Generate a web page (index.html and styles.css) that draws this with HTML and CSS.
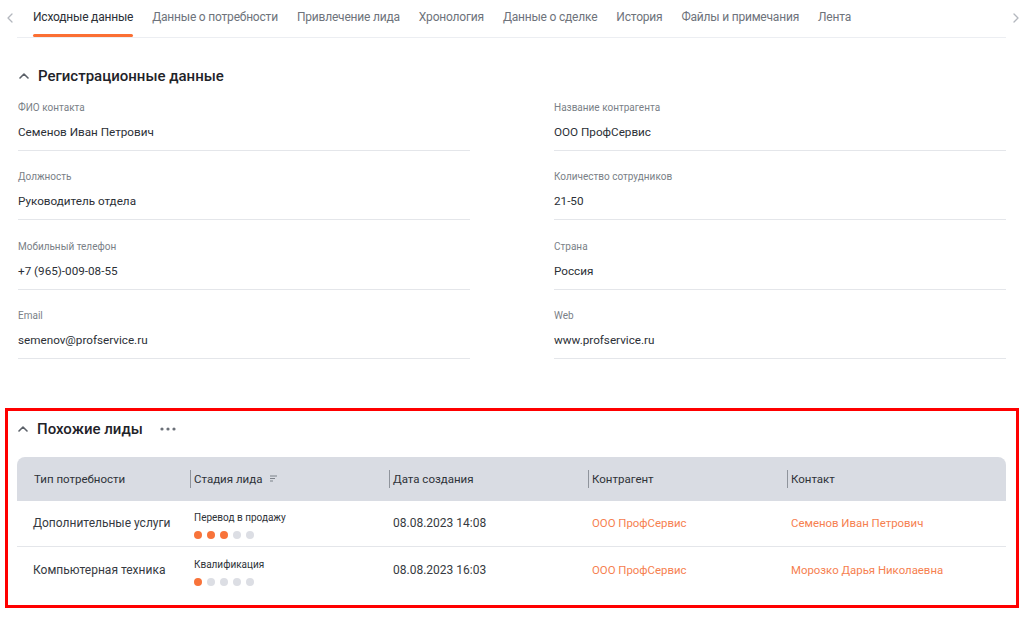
FILE: index.html
```html
<!DOCTYPE html>
<html lang="ru">
<head>
<meta charset="utf-8">
<title>Лид</title>
<link rel="stylesheet" href="styles.css">
</head>
<body>
<div class="page">
  <nav class="tabs">
    <button class="tab-arrow tab-arrow--left" aria-label="Назад">
      <svg width="6" height="10" viewBox="0 0 6 10"><path d="M5 1 1 5l4 4" fill="none" stroke="#b3b7be" stroke-width="1.3" stroke-linecap="round" stroke-linejoin="round"/></svg>
    </button>
    <ul class="tab-list">
      <li class="tab tab--active">Исходные данные</li>
      <li class="tab">Данные о потребности</li>
      <li class="tab">Привлечение лида</li>
      <li class="tab">Хронология</li>
      <li class="tab">Данные о сделке</li>
      <li class="tab">История</li>
      <li class="tab">Файлы и примечания</li>
      <li class="tab">Лента</li>
    </ul>
    <button class="tab-arrow tab-arrow--right" aria-label="Вперёд">
      <svg width="6" height="10" viewBox="0 0 6 10"><path d="M1 1l4 4-4 4" fill="none" stroke="#b3b7be" stroke-width="1.3" stroke-linecap="round" stroke-linejoin="round"/></svg>
    </button>
  </nav>

  <section class="section section--reg">
    <h2 class="section-title">
      <svg class="chev" width="10" height="6" viewBox="0 0 10 6"><path d="M1 5 5 1l4 4" fill="none" stroke="#5b6068" stroke-width="1.6" stroke-linecap="round" stroke-linejoin="round"/></svg>
      <span>Регистрационные данные</span>
    </h2>
    <div class="fields">
      <div class="field"><div class="field-label">ФИО контакта</div><div class="field-value">Семенов Иван Петрович</div></div>
      <div class="field"><div class="field-label">Название контрагента</div><div class="field-value">ООО ПрофСервис</div></div>
      <div class="field"><div class="field-label">Должность</div><div class="field-value">Руководитель отдела</div></div>
      <div class="field"><div class="field-label">Количество сотрудников</div><div class="field-value">21-50</div></div>
      <div class="field"><div class="field-label">Мобильный телефон</div><div class="field-value">+7 (965)-009-08-55</div></div>
      <div class="field"><div class="field-label">Страна</div><div class="field-value">Россия</div></div>
      <div class="field"><div class="field-label">Email</div><div class="field-value">semenov@profservice.ru</div></div>
      <div class="field"><div class="field-label">Web</div><div class="field-value">www.profservice.ru</div></div>
    </div>
  </section>

  <section class="section section--similar">
    <h2 class="section-title">
      <svg class="chev" width="10" height="6" viewBox="0 0 10 6"><path d="M1 5 5 1l4 4" fill="none" stroke="#5b6068" stroke-width="1.6" stroke-linecap="round" stroke-linejoin="round"/></svg>
      <span>Похожие лиды</span>
      <svg class="more" width="16" height="4" viewBox="0 0 16 4"><circle cx="2" cy="2" r="1.6" fill="#6b7078"/><circle cx="8" cy="2" r="1.6" fill="#6b7078"/><circle cx="14" cy="2" r="1.6" fill="#6b7078"/></svg>
    </h2>
    <table class="leads">
      <colgroup>
        <col class="col-1"><col class="col-2"><col class="col-3"><col class="col-4"><col>
      </colgroup>
      <thead>
        <tr>
          <th class="th-first">Тип потребности</th>
          <th><span class="th-sep">Стадия лида
            <svg class="sort" width="8" height="7" viewBox="0 0 8 7"><path d="M0 1h7M0 3.5h5M0 6h3" stroke="#7d828a" stroke-width="1.1"/></svg></span></th>
          <th><span class="th-sep">Дата создания</span></th>
          <th><span class="th-sep">Контрагент</span></th>
          <th><span class="th-sep">Контакт</span></th>
        </tr>
      </thead>
      <tbody>
        <tr>
          <td class="td-first">Дополнительные услуги</td>
          <td class="td-stage">
            <div class="stage-name">Перевод в продажу</div>
            <div class="stage-dots"><i class="dot on"></i><i class="dot on"></i><i class="dot on"></i><i class="dot"></i><i class="dot"></i></div>
          </td>
          <td class="td-date">08.08.2023 14:08</td>
          <td><a class="link">ООО ПрофСервис</a></td>
          <td><a class="link">Семенов Иван Петрович</a></td>
        </tr>
        <tr>
          <td class="td-first">Компьютерная техника</td>
          <td class="td-stage">
            <div class="stage-name">Квалификация</div>
            <div class="stage-dots"><i class="dot on"></i><i class="dot"></i><i class="dot"></i><i class="dot"></i><i class="dot"></i></div>
          </td>
          <td class="td-date">08.08.2023 16:03</td>
          <td><a class="link">ООО ПрофСервис</a></td>
          <td><a class="link">Морозко Дарья Николаевна</a></td>
        </tr>
      </tbody>
    </table>
  </section>
</div>
</body>
</html>
```

FILE: styles.css
```css
* { box-sizing: border-box; }
html, body { margin: 0; padding: 0; background: #fff; }
body {
  font-family: Roboto, "Liberation Sans", sans-serif;
  color: #2b2f36;
  width: 1024px;
  height: 621px;
  overflow: hidden;
}

/* tabs */
.tabs {
  display: flex;
  height: 38px;
}
.tab-arrow {
  border: 0;
  background: none;
  padding: 0;
  height: 35px;
  display: flex;
  align-items: center;
  justify-content: center;
  cursor: pointer;
}
.tab-arrow--left { width: 17px; padding-left: 3px; }
.tab-arrow--right { width: 18px; padding-left: 1px; }
.tab-list {
  flex: 1;
  display: flex;
  gap: 19px;
  list-style: none;
  margin: 0;
  padding: 0 0 0 16px;
  border-bottom: 1px solid #eceef2;
}
.tab {
  position: relative;
  font-size: 12px;
  letter-spacing: -0.2px;
  line-height: 35px;
  color: #6e737b;
  white-space: nowrap;
}
.tab--active { color: #2b2f36; }
.tab--active::after {
  content: "";
  position: absolute;
  left: 0;
  right: 0;
  bottom: 0;
  height: 3px;
  border-radius: 2px;
  background: #fb6f33;
}

/* sections */
.section-title {
  display: flex;
  align-items: center;
  margin: 0;
  font-size: 15px;
  line-height: 20px;
  font-weight: 500;
  color: #1f2329;
}
.chev { margin: 0 9px 0 0; flex: none; }
.more { margin-left: 17px; margin-top: 1px; }

.section--reg {
  padding: 28px 18px 0 18px;
}
.section--reg .section-title { padding-left: 1px; }
.fields {
  display: grid;
  grid-template-columns: 1fr 1fr;
  column-gap: 84px;
  row-gap: 19.33px;
  margin-top: 15px;
}
.field {
  border-bottom: 1px solid #e4e6ea;
  padding-bottom: 9px;
}
.field-label {
  font-size: 10px;
  line-height: 14px;
  color: #7a7f87;
}
.field-value {
  margin-top: 8px;
  font-size: 11.7px;
  line-height: 18px;
  color: #2b2f36;
}

.section--similar {
  margin: 49px 5px 0 5px;
  border: 3px solid #ff0000;
  padding: 8px 10px 12px 9px;
}
.section--similar .section-title { padding-left: 1px; }

.leads {
  margin-top: 18px;
  width: 100%;
  border-collapse: separate;
  border-spacing: 0;
  table-layout: fixed;
  font-size: 12px;
}
.col-1 { width: 173px; }
.col-2, .col-3, .col-4 { width: 199px; }

.leads thead th {
  background: #d9dce3;
  height: 44px;
  padding: 0;
  font-weight: 400;
  font-size: 11.5px;
  text-align: left;
  color: #2e3238;
  vertical-align: middle;
}
.leads thead th:first-child { border-top-left-radius: 8px; }
.leads thead th:last-child { border-top-right-radius: 8px; }
.th-first { padding-left: 17px !important; }
.th-sep {
  display: inline-flex;
  align-items: center;
  border-left: 1px solid #8f949c;
  padding-left: 3px;
  height: 18px;
  line-height: 18px;
}
.sort { margin-left: 8px; }

.leads tbody td {
  height: 46px;
  padding: 0 0 0 4px;
  vertical-align: middle;
  color: #363a41;
}
.leads tbody tr:first-child td { border-bottom: 1px solid #e4e6ea; }
.leads tbody td.td-first { padding-left: 16px; }
.td-stage { padding-top: 5px !important; }
.stage-name {
  font-size: 10px;
  line-height: 12px;
  color: #2e3238;
}
.stage-dots {
  display: flex;
  gap: 5px;
  margin-top: 7px;
}
.dot {
  width: 8px;
  height: 8px;
  border-radius: 50%;
  background: #dcdee4;
}
.dot.on { background: #f8733a; }
.link {
  font-size: 11.4px;
  color: #f6804f;
  text-decoration: none;
  cursor: pointer;
}
```
